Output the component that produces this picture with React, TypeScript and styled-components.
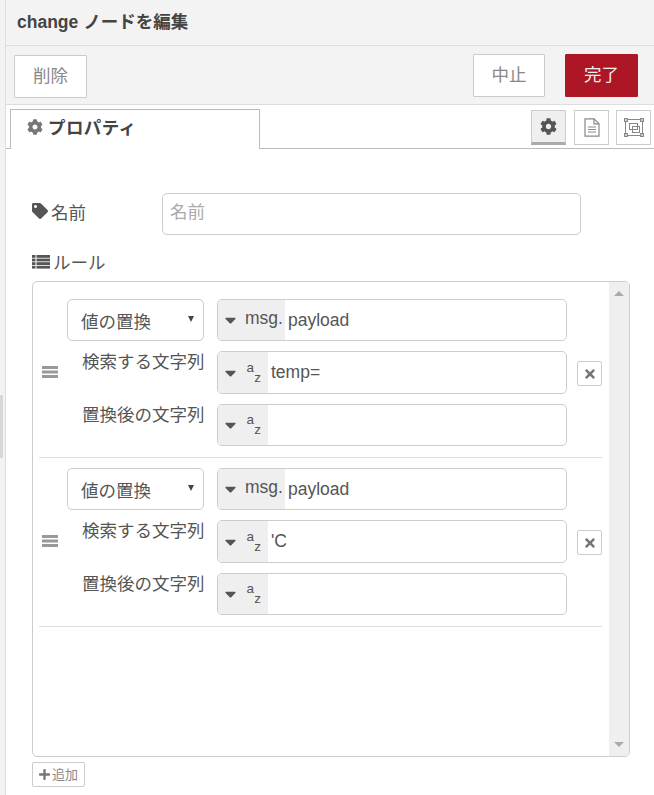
import React from "react";
import styled, { createGlobalStyle } from "styled-components";
import { FaCog, FaTag, FaPlus, FaTimes, FaCaretDown } from "react-icons/fa";

const Global = createGlobalStyle`
  html, body { margin: 0; padding: 0; background: #fff; }
  body { font-family: "Liberation Sans", "Noto Sans CJK JP", sans-serif; color: #555; font-size: 17.5px; overflow: hidden; }
`;

const Page = styled.div`
  width: 654px; height: 795px; display: flex; overflow: hidden;
`;
const Rail = styled.div`
  width: 5px; background: #f3f3f3; border-right: 1px solid #ddd; display: flex; align-items: flex-start; flex: none;
`;
const Grip = styled.div`
  width: 3px; height: 63px; margin-top: 395px; background: #d8d8d8;
`;
const Main = styled.div`
  flex: 1; min-width: 0; display: flex; flex-direction: column;
`;
const Header = styled.div`
  height: 41px; background: #f3f3f3; border-bottom: 1px solid #ddd; display: flex; align-items: center;
  padding: 0 0 4px 11px; font-weight: 700; font-size: 17.5px; color: #444;
`;
const Toolbar = styled.div`
  height: 59px; background: #f3f3f3; border-bottom: 1px solid #ddd; display: flex; align-items: flex-start;
  padding: 8px 16px 0 8px; box-sizing: border-box;
`;
const ActionButton = styled.button<{ $primary?: boolean; $left?: boolean; $narrow?: boolean }>`
  height: 43px; width: ${p => (p.$narrow ? 72 : 73)}px; margin-top: ${p => (p.$left ? 1 : 0)}px;
  margin-left: ${p => (p.$left ? 0 : 20)}px; box-sizing: border-box;
  border: 1px solid ${p => (p.$primary ? "#ad1625" : "#ccc")}; background: ${p => (p.$primary ? "#ad1625" : "#fff")};
  color: ${p => (p.$primary ? "#eee" : "#888")}; border-radius: 1px; font: inherit; font-size: 17.5px; padding: 0 0 5px;
`;
const Spacer = styled.div`flex: 1;`;
const TabBar = styled.div`
  height: 39px; border-bottom: 1px solid #bbb; display: flex; align-items: flex-start;
  padding: 4px 3px 0 4px;
`;
const Tab = styled.div`
  width: 232px; height: 33px; border: 1px solid #bbb; border-bottom: none; background: #fff; display: flex; align-items: center;
  padding: 0 0 6px 16px; font-weight: 700; color: #444; font-size: 17.5px; gap: 5px; letter-spacing: 0.4px;
  svg { color: #777; width: 16px; height: 16px; }
`;
const ViewButtons = styled.div`
  margin-left: auto; display: flex; gap: 8px; padding-top: 1px;
  > :last-child { margin-left: -1px; }
`;
const ViewButton = styled.div<{ $active?: boolean }>`
  width: 35px; height: 35px; box-sizing: border-box; display: flex; align-items: center; justify-content: center;
  border: 1px solid #ccc; background: ${p => (p.$active ? "#efefef" : "#fff")};
  border-bottom: ${p => (p.$active ? "3px solid #aaa" : "1px solid #ccc")};
  color: ${p => (p.$active ? "#555" : "#888")};
`;
const Content = styled.div`
  flex: 1; padding: 44px 24px 0 26px; min-height: 0; display: flex; flex-direction: column;
`;
const NameRow = styled.div`
  display: flex; align-items: center; height: 42px; margin-right: 49px;
`;
const Label = styled.label`
  display: flex; align-items: center; gap: 3px; color: #555; font-size: 17.5px;
  svg { color: #555; width: 16px; height: 16px; flex: none; }
`;
const NameLabel = styled(Label)`
  width: 130px; margin-top: -6px;
`;
const NameInput = styled.div`
  flex: 1; height: 42px; box-sizing: border-box; border: 1px solid #ccc; border-radius: 5px; display: flex; align-items: center;
  padding: 0 0 7px 7px; color: #aaa; font-size: 17.5px;
`;
const RuleLabel = styled(Label)`
  margin-top: 14px; height: 24px; svg { width: 18px; height: 14px; margin-top: 1px; }
`;
const ListBox = styled.div`
  margin-top: 8px; height: 476px; box-sizing: border-box; width: 598px; border: 1px solid #ccc; border-radius: 5px; display: flex; overflow: hidden;
`;
const Rules = styled.div`
  flex: 1; padding: 7px 7px 0 6px; min-width: 0;
`;
const Rule = styled.div`
  border-bottom: 1px solid #ddd; height: 169px; box-sizing: border-box; display: flex; align-items: flex-start;
  padding-top: 10px;
`;
const Handle = styled.div`
  width: 28px; padding: 67px 0 0 3px; box-sizing: border-box; flex: none;
  svg { display: block; }
`;
const Fields = styled.div`
  width: 500px; flex: none; display: grid; grid-template-columns: 137px 350px; column-gap: 13px; row-gap: 10px;
  grid-template-rows: 42px 43px 42px;
`;
const ActionSelect = styled.div`
  border: 1px solid #ccc; border-radius: 5px; display: flex; align-items: center; justify-content: space-between;
  padding: 0 9px 0 13px; box-sizing: border-box; font-size: 17.5px; color: #555;
`;
const SelectArrow = styled.span`
  width: 0; height: 0; border-left: 3.5px solid transparent; border-right: 3.5px solid transparent; border-top: 6px solid #444;
  margin-top: -2px;
`;
const FieldLabel = styled.div`
  padding: 0 0 0 15px; font-size: 17.5px; color: #555; white-space: nowrap; line-height: 23px;
`;
const TypedInput = styled.div`
  border: 1px solid #ccc; border-radius: 5px; display: flex; align-items: stretch; overflow: hidden; box-sizing: border-box;
`;
const TypeButton = styled.div<{ $wide?: boolean }>`
  width: ${p => (p.$wide ? 67 : 50)}px; background: #efefef; display: flex; align-items: center; flex: none; padding-left: 7px; box-sizing: border-box;
  gap: 8px; color: #555; font-size: 17.5px;
  > svg:first-child { color: #555; width: 11px; height: 18px; flex: none; }
`;
const MsgPrefix = styled.span`
  margin: -4px 0 0 1px;
`;
const AzGlyph = styled.svg`
  flex: none; margin: -2px 0 0 2px;
  text { font-family: "Liberation Sans", sans-serif; fill: #555; font-size: 13.5px; }
`;
const TypedValue = styled.div`
  flex: 1; display: flex; align-items: center; padding-left: 3px; font-size: 17.5px; color: #555;
`;
const RemoveButton = styled.div`
  width: 25px; height: 25px; box-sizing: border-box; flex: none; margin: 62px 0 0 10px; border: 1px solid #ccc; border-radius: 2px;
  display: flex; align-items: center; justify-content: center; color: #777;
  svg { width: 10px; height: 14px; }
`;
const Scrollbar = styled.div`
  width: 20px; flex: none; background: #efefef; display: flex; flex-direction: column; align-items: center; justify-content: space-between;
  padding: 9px 0; box-sizing: border-box;
`;
const ScrollArrow = styled.span<{ $down?: boolean }>`
  width: 0; height: 0; border-left: 5px solid transparent; border-right: 5px solid transparent;
  ${p => (p.$down ? "border-top: 5px solid #aaa;" : "border-bottom: 5px solid #aaa;")}
`;
const AddButton = styled.div`
  margin-top: 5px; width: 53px; height: 25px; box-sizing: border-box; border: 1px solid #ccc; border-radius: 2px; display: flex; align-items: center;
  justify-content: center; gap: 2px; color: #888; font-size: 13px; padding-bottom: 3px;
  svg { width: 11px; height: 13px; color: #777; margin-top: 3px; }
`;

const DocIcon = () => (
  <svg width="16" height="19" viewBox="0 0 16 19" fill="none" stroke="#888" strokeWidth="1.2">
    <path d="M1 .8 H10 L15 5.8 V18.2 H1 Z" />
    <path d="M10 .8 V5.8 H15" />
    <path d="M4 9 H12 M4 11.5 H12 M4 14 H12" />
  </svg>
);

const SelectionIcon = () => (
  <svg width="20" height="19" viewBox="0 0 20 19" fill="none" stroke="#888" strokeWidth="1">
    <rect x="1.5" y="1.5" width="17" height="16" />
    <rect x="5.5" y="5.5" width="8" height="6" />
    <rect x="8.5" y="8.5" width="7" height="6" />
    <g fill="#ccc">
      <rect x="0.5" y="0.5" width="3" height="3" />
      <rect x="16.5" y="0.5" width="3" height="3" />
      <rect x="0.5" y="15.5" width="3" height="3" />
      <rect x="16.5" y="15.5" width="3" height="3" />
    </g>
  </svg>
);

const ListIcon = () => (
  <svg viewBox="0 0 18 14" fill="#555">
    {[0, 3.6, 7.2, 10.8].map(y => (
      <g key={y}>
        <rect x="0" y={y} width="3.5" height="2.8" />
        <rect x="4.5" y={y} width="13.5" height="2.8" />
      </g>
    ))}
  </svg>
);

const HandleIcon = () => (
  <svg width="16" height="12" viewBox="0 0 16 12" fill="#999">
    <rect x="0" y="0" width="16" height="3" />
    <rect x="0" y="4.5" width="16" height="3" />
    <rect x="0" y="9" width="16" height="3" />
  </svg>
);

const rules = ["temp=", "'C"];

const StringType = () => (
  <TypeButton>
    <FaCaretDown />
    <AzGlyph width="16" height="26" viewBox="0 0 16 26">
      <text x="0.5" y="12.5">a</text>
      <text x="8.2" y="22.5">z</text>
    </AzGlyph>
  </TypeButton>
);

export default function App() {
  return (
    <Page>
      <Global />
      <Rail><Grip /></Rail>
      <Main>
        <Header>change ノードを編集</Header>
        <Toolbar>
          <ActionButton $left>削除</ActionButton>
          <Spacer />
          <ActionButton $narrow>中止</ActionButton>
          <ActionButton $primary>完了</ActionButton>
        </Toolbar>
        <TabBar>
          <Tab><FaCog />プロパティ</Tab>
          <ViewButtons>
            <ViewButton $active><FaCog size={17} /></ViewButton>
            <ViewButton><DocIcon /></ViewButton>
            <ViewButton><SelectionIcon /></ViewButton>
          </ViewButtons>
        </TabBar>
        <Content>
          <NameRow>
            <NameLabel><FaTag />名前</NameLabel>
            <NameInput>名前</NameInput>
          </NameRow>
          <RuleLabel><ListIcon />ルール</RuleLabel>
          <ListBox>
            <Rules>
              {rules.map(r => (
                <Rule key={r}>
                  <Handle><HandleIcon /></Handle>
                  <Fields>
                    <ActionSelect>値の置換<SelectArrow /></ActionSelect>
                    <TypedInput>
                      <TypeButton $wide><FaCaretDown /><MsgPrefix>msg.</MsgPrefix></TypeButton>
                      <TypedValue>payload</TypedValue>
                    </TypedInput>
                    <FieldLabel>検索する文字列</FieldLabel>
                    <TypedInput><StringType /><TypedValue>{r}</TypedValue></TypedInput>
                    <FieldLabel>置換後の文字列</FieldLabel>
                    <TypedInput><StringType /><TypedValue /></TypedInput>
                  </Fields>
                  <RemoveButton><FaTimes /></RemoveButton>
                </Rule>
              ))}
            </Rules>
            <Scrollbar><ScrollArrow /><ScrollArrow $down /></Scrollbar>
          </ListBox>
          <AddButton><FaPlus />追加</AddButton>
        </Content>
      </Main>
    </Page>
  );
}
